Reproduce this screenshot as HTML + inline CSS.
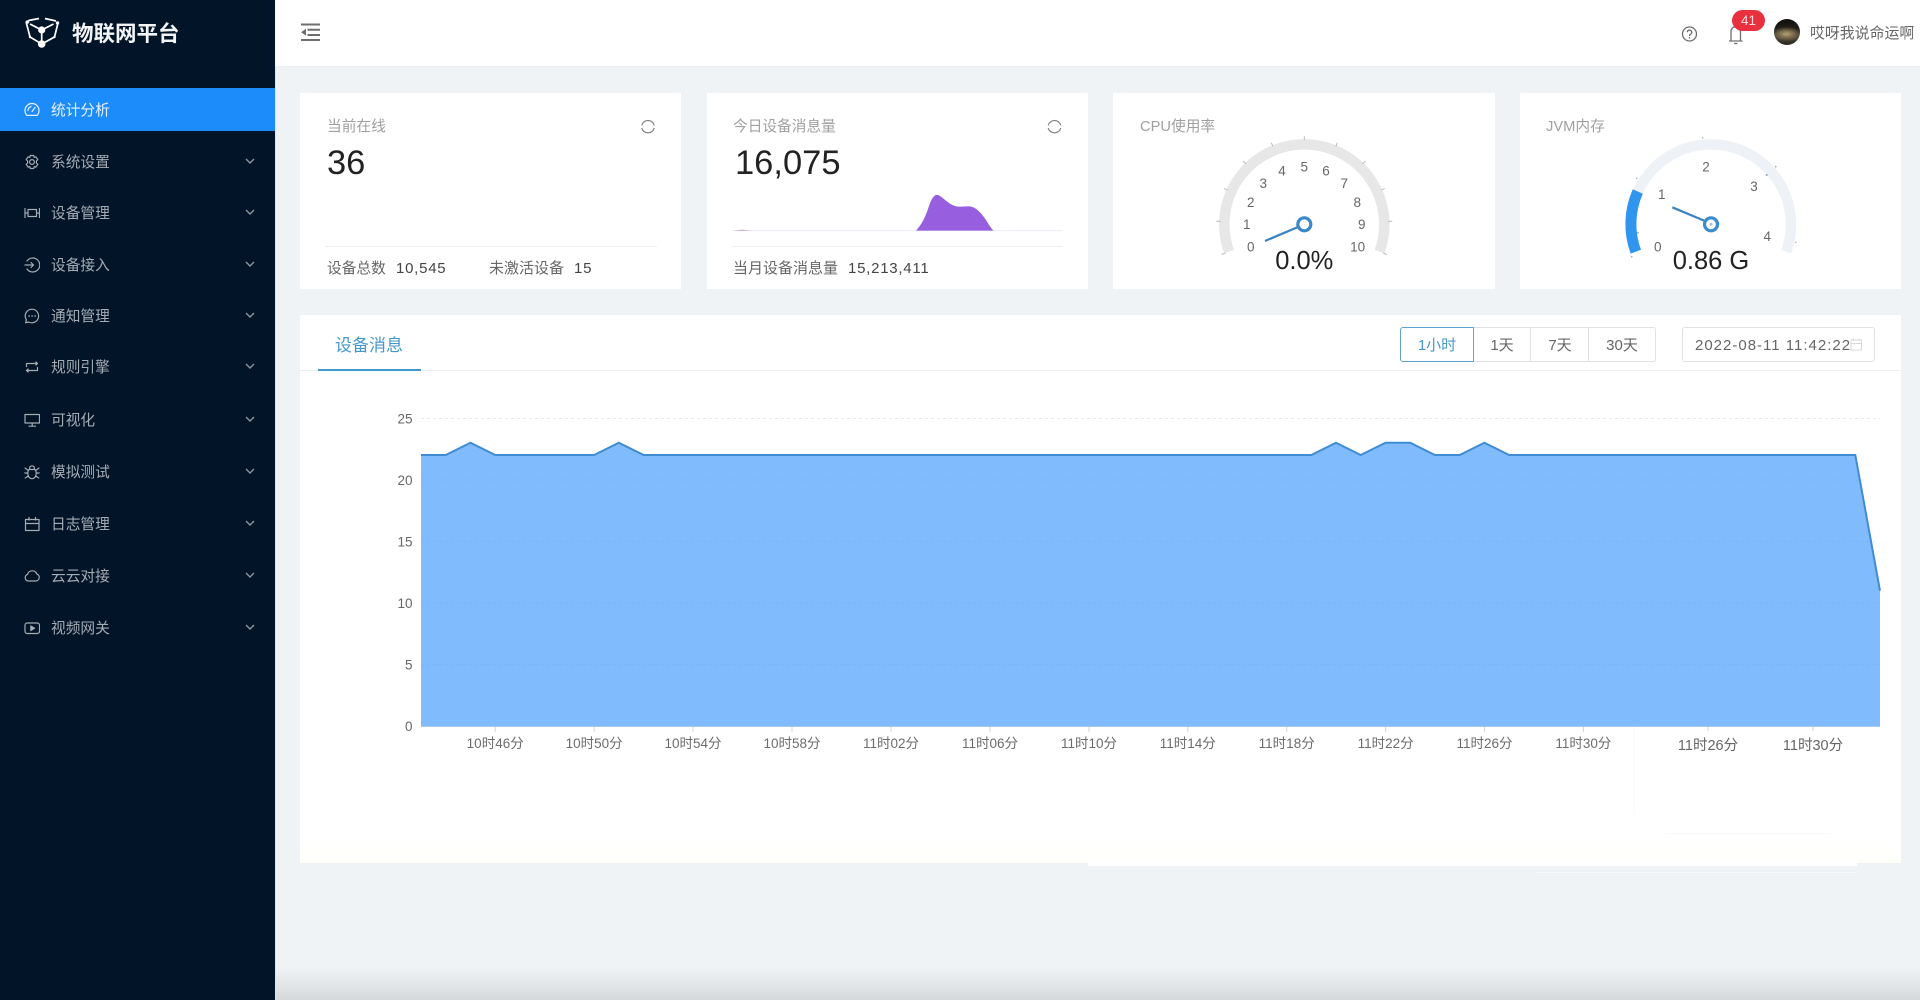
<!DOCTYPE html>
<html lang="zh-CN">
<head>
<meta charset="utf-8">
<title>物联网平台</title>
<style>
html,body{margin:0;padding:0;width:1920px;height:1000px;overflow:hidden;background:#eff3f6;font-family:"Liberation Sans","Noto Sans CJK SC",sans-serif}
div,span{box-sizing:border-box}
.a{position:absolute}
.t{position:absolute;white-space:nowrap;line-height:20px;height:20px}
#side{left:0;top:0;width:275px;height:1000px;background:#021428;overflow:hidden}
#active{left:0;top:88px;width:275px;height:43px;background:#1c8cfa}
.m{position:absolute;left:0;width:275px;height:20px;color:#a4acb4;font-size:14.7px;line-height:20px}
.m span{position:absolute;left:51px;top:0;white-space:nowrap}
.m svg.i{position:absolute;left:24px;top:1px;width:16px;height:16px;fill:none;stroke:currentColor;stroke-width:1.2;stroke-linecap:round;stroke-linejoin:round}
.m svg.c{position:absolute;left:245px;top:5px;width:10px;height:6px;fill:none;stroke:#8d959d;stroke-width:1.4}
#head{left:275px;top:0;width:1645px;height:67px;background:#fff;border-bottom:1px solid #e9eef0}
.card{position:absolute;background:#fff}
.ttl{font-size:14.7px;color:#a0a0a0}
.big{font-size:34.5px;color:#222;line-height:40px;height:40px}
.ft{font-size:14.7px;color:#666}
.num{font-size:15px;color:#444;letter-spacing:.75px}
.hr{position:absolute;height:1px;background:#eeeff2}
.btn{position:absolute;top:327px;height:35px;border:1px solid #dfe1e4;background:#fff;font-size:15px;color:#666;line-height:35px;text-align:center;white-space:nowrap}
svg.page{position:absolute;left:0;top:0;width:1920px;height:1000px;pointer-events:none}
svg text{font-family:"Liberation Sans","Noto Sans CJK SC",sans-serif}
</style>
</head>
<body>

<!-- Cards -->
<div class="card" style="left:300px;top:93px;width:381px;height:196px"></div>
<div class="card" style="left:707px;top:93px;width:381px;height:196px"></div>
<div class="card" style="left:1113px;top:93px;width:382px;height:196px"></div>
<div class="card" style="left:1520px;top:93px;width:381px;height:196px"></div>
<div class="card" style="left:300px;top:315px;width:1601px;height:548px;background:linear-gradient(#fff 0,#fff 96%,#fffffa 100%)"></div>
<div class="a" style="left:1088px;top:860px;width:769px;height:6px;background:#fff"></div>
<div class="a" style="left:1536px;top:872px;width:321px;height:1px;background:#f7f9fb"></div>
<div class="a" style="left:275px;top:968px;width:1645px;height:32px;background:linear-gradient(rgba(205,210,213,0),#d5d9dc)"></div>

<!-- Header -->
<div id="head" class="a"></div>
<svg class="page" viewBox="0 0 1920 1000">
  <g stroke="#6f6f6f" stroke-width="2" fill="none">
    <path d="M301 24.5H320M307.5 29.7H320M307.5 35H320M301 40H320"/>
  </g>
  <path d="M301 32.2L306 28.8V35.6Z" fill="#6f6f6f"/>
  <g fill="none" stroke="#6f6f6f" stroke-width="1.3">
    <circle cx="1689.5" cy="34" r="7"/>
    <path d="M1687.3 32.3A2.2 2.2 0 1 1 1690.5 34.3C1689.8 34.8 1689.5 35.2 1689.5 36"/>
    <path d="M1731 41V31.5A4.7 4.7 0 0 1 1740.5 31.5V41M1729 41H1742.5M1734 43.5H1737.5"/>
  </g>
  <circle cx="1689.5" cy="37.8" r=".8" fill="#6f6f6f"/>
</svg>
<div class="a" style="left:1732px;top:10px;width:33px;height:21px;background:#e8303f;border-radius:11px;color:#fbd9dc;font-size:13.5px;line-height:21px;text-align:center">41</div>
<div class="a" style="left:1774px;top:19px;width:26px;height:26px;border-radius:50%;background:radial-gradient(ellipse 60% 28% at 48% 58%,#b3a17a 0,#7d6c4f 45%,rgba(40,36,28,0) 100%),linear-gradient(#0f0e0c 0,#27231b 45%,#4a4334 70%,#2a2720 100%)"></div>
<div class="t" style="left:1810px;top:24px;font-size:14.9px;color:#666">哎呀我说命运啊</div>

<!-- Sidebar -->
<div id="side" class="a">
  <svg class="a" style="left:0;top:0" width="70" height="60" viewBox="0 0 70 60" fill="none" stroke="#fff" stroke-width="1.7">
    <path d="M26 21.5L30 37 41.7 44 54.5 37 58 23M28.5 20.5L39 18.5M45 18.5L56 21M30 24L41.7 30 53.5 24M41.7 30V44"/>
    <g fill="#fff" stroke="none"><circle cx="41.7" cy="30" r="3.6"/><circle cx="41.7" cy="44" r="3.8"/><circle cx="27.5" cy="22" r="1.7"/><circle cx="57.5" cy="23" r="1.7"/><circle cx="30" cy="37" r="1.2"/><circle cx="54.5" cy="37" r="1.2"/></g>
  </svg>
  <div class="t" style="left:72px;top:23px;font-size:21.5px;font-weight:700;color:#f2f4f6;line-height:22px;height:22px">物联网平台</div>

  <div id="active" class="a"></div>
  <div class="m" style="top:101px;color:#e8f2fd">
    <svg class="i" viewBox="0 0 16 16"><path d="M3 13.4A7 7 0 1 1 13 13.4Z"/><path d="M8 9.5L11 5.5M4 8.5A4.5 4.5 0 0 1 7 4.5"/></svg>
    <span>统计分析</span>
  </div>

  <div class="m" style="top:153px">
    <svg class="i" viewBox="0 0 16 16"><path d="M6.3 1.5H9.7L10.2 3.4 11.9 2.8 13.8 5.6 12.4 7V9L13.8 10.4 11.9 13.2 10.2 12.6 9.7 14.5H6.3L5.8 12.6 4.1 13.2 2.2 10.4 3.6 9V7L2.2 5.6 4.1 2.8 5.8 3.4Z"/><circle cx="8" cy="8" r="2.4"/></svg>
    <span>系统设置</span><svg class="c" viewBox="0 0 10 6"><path d="M1 1L5 5 9 1"/></svg>
  </div>
  <div class="m" style="top:204px">
    <svg class="i" viewBox="0 0 16 16"><path d="M1 3.5V12.5M15.5 3.5V12.5M1 8H4M12.5 8H15.5M4 4.5H12.5V11.5H4Z"/></svg>
    <span>设备管理</span><svg class="c" viewBox="0 0 10 6"><path d="M1 1L5 5 9 1"/></svg>
  </div>
  <div class="m" style="top:256px">
    <svg class="i" viewBox="0 0 16 16"><path d="M3 4A7 7 0 1 1 3 12M1 8H9.5M7 5.5L9.5 8 7 10.5"/></svg>
    <span>设备接入</span><svg class="c" viewBox="0 0 10 6"><path d="M1 1L5 5 9 1"/></svg>
  </div>
  <div class="m" style="top:307px">
    <svg class="i" viewBox="0 0 16 16"><path d="M8 1.2A6.8 6.8 0 1 1 4.6 14L1.6 14.8 2.4 11.8A6.8 6.8 0 0 1 8 1.2Z"/><path d="M5 8H5.2M8 8H8.2M11 8H11.2" stroke-width="1.6"/></svg>
    <span>通知管理</span><svg class="c" viewBox="0 0 10 6"><path d="M1 1L5 5 9 1"/></svg>
  </div>
  <div class="m" style="top:358px">
    <svg class="i" viewBox="0 0 16 16"><path d="M2.5 7.5V4.5H13.5M11.8 3L13.5 4.5 11.8 6M13.5 8.5V11.5H2.5M4.2 10L2.5 11.5 4.2 13"/></svg>
    <span>规则引擎</span><svg class="c" viewBox="0 0 10 6"><path d="M1 1L5 5 9 1"/></svg>
  </div>
  <div class="m" style="top:411px">
    <svg class="i" viewBox="0 0 16 16"><path d="M1 2.5H15.5V11H1ZM8.2 11V14M5 14.2H11.5"/></svg>
    <span>可视化</span><svg class="c" viewBox="0 0 10 6"><path d="M1 1L5 5 9 1"/></svg>
  </div>
  <div class="m" style="top:463px">
    <svg class="i" viewBox="0 0 16 16"><path d="M5 5.5H11C12.2 7 12.4 9 12 11 11.5 13.2 9.8 14.8 8 14.8S4.5 13.2 4 11C3.6 9 3.8 7 5 5.5ZM5.5 5.2C5.5 3 6.5 1.8 8 1.8S10.5 3 10.5 5.2M1 4L4.3 6.5M15 4L11.7 6.5M.8 9H3.8M15.2 9H12.2M1.2 14L4.3 12M14.8 14L11.7 12"/></svg>
    <span>模拟测试</span><svg class="c" viewBox="0 0 10 6"><path d="M1 1L5 5 9 1"/></svg>
  </div>
  <div class="m" style="top:515px">
    <svg class="i" viewBox="0 0 16 16"><path d="M1.5 3.5H15V14.5H1.5ZM1.5 7.5H15M5 1.5V4M11.5 1.5V4"/></svg>
    <span>日志管理</span><svg class="c" viewBox="0 0 10 6"><path d="M1 1L5 5 9 1"/></svg>
  </div>
  <div class="m" style="top:567px">
    <svg class="i" viewBox="0 0 16 16"><path d="M4.2 13H12A3.6 3.6 0 0 0 12.8 6 4.9 4.9 0 0 0 3.5 6.4 3.4 3.4 0 0 0 4.2 13Z"/></svg>
    <span>云云对接</span><svg class="c" viewBox="0 0 10 6"><path d="M1 1L5 5 9 1"/></svg>
  </div>
  <div class="m" style="top:619px">
    <svg class="i" viewBox="0 0 16 16"><rect x="1" y="3" width="14.5" height="10.5" rx="2.2"/><path d="M6.8 6L10.5 8.2 6.8 10.5Z" fill="currentColor"/></svg>
    <span>视频网关</span><svg class="c" viewBox="0 0 10 6"><path d="M1 1L5 5 9 1"/></svg>
  </div>
</div>
<div class="a" style="left:275px;top:67px;width:1px;height:933px;background:#e2e6ea"></div>

<!-- Card contents -->
<div class="t ttl" style="left:327px;top:117px">当前在线</div>
<div class="t big" style="left:327px;top:143px">36</div>
<div class="hr" style="left:325px;top:246px;width:332px"></div>
<div class="t ft" style="left:327px;top:259px">设备总数</div>
<div class="t num" style="left:396px;top:259px">10,545</div>
<div class="t ft" style="left:489px;top:259px;font-size:15px">未激活设备</div>
<div class="t num" style="left:574px;top:259px">15</div>

<div class="t ttl" style="left:733px;top:117px">今日设备消息量</div>
<div class="t big" style="left:735px;top:143px">16,075</div>
<div class="hr" style="left:732px;top:246px;width:331px"></div>
<div class="t ft" style="left:733px;top:259px;font-size:15px">当月设备消息量</div>
<div class="t num" style="left:848px;top:259px">15,213,411</div>

<div class="t ttl" style="left:1140px;top:117px">CPU使用率</div>
<div class="t ttl" style="left:1546px;top:117px">JVM内存</div>

<!-- Chart header -->
<div class="t" style="left:335px;top:336px;font-size:17px;color:#4497cd">设备消息</div>
<div class="hr" style="left:300px;top:370px;width:1601px;height:1px;background:#eceef0"></div>
<div class="a" style="left:318px;top:369px;width:103px;height:2px;background:#409bcc"></div>

<div class="btn" style="left:1472px;width:60px">1天</div>
<div class="btn" style="left:1530px;width:60px">7天</div>
<div class="btn" style="left:1588px;width:68px;border-radius:0 3px 3px 0">30天</div>
<div class="btn" style="left:1400px;width:74px;border-color:#5ea3cf;color:#4a98cd;border-radius:3px 0 0 3px">1小时</div>
<div class="btn" style="left:1682px;width:193px;border-radius:3px;text-align:left;padding-left:12px;letter-spacing:1px;color:#666">2022-08-11 11:42:22</div>

<svg class="page" viewBox="0 0 1920 1000">
  <!-- refresh icons -->
  <g fill="none" stroke="#858585" stroke-width="1.2">
    <path d="M641.7 125.4A6.5 6.5 0 0 1 654.3 125.4M654.3 128A6.5 6.5 0 0 1 641.7 128"/>
    <path d="M1048.2 125.4A6.5 6.5 0 0 1 1060.8 125.4M1060.8 128A6.5 6.5 0 0 1 1048.2 128"/>
  </g>

  <!-- sparkline -->
  <path d="M733 230.6H1063" stroke="#f2eff7" stroke-width="1.2"/>
  <path d="M733 230.8L742 229.6 752 230.8Z" fill="#b9a6d8"/>
  <path d="M916 230.6C922 224 925 218 929 206 932 197 935 194 938 195 943 197 948 204 955 206 960 207.5 965 206 971 206.5 977 208 982 214 986 220 989 225 991 228 993.5 230.6Z" fill="#975fe0"/>

  <!-- Gauge 1 -->
  <path d="M1229.1 251.7A80 80 0 1 1 1379.5 251.7" fill="none" stroke="#e7e7e7" stroke-width="10.5"/>
  <g transform="translate(1304.3 224.3)" stroke="#b4b4b4" stroke-width=".9">
    <line x1="-84" x2="-88" transform="rotate(-20)"/><line x1="-84" x2="-88" transform="rotate(2)"/><line x1="-84" x2="-88" transform="rotate(24)"/><line x1="-84" x2="-88" transform="rotate(46)"/><line x1="-84" x2="-88" transform="rotate(68)"/><line x1="-84" x2="-88" transform="rotate(90)"/><line x1="-84" x2="-88" transform="rotate(112)"/><line x1="-84" x2="-88" transform="rotate(134)"/><line x1="-84" x2="-88" transform="rotate(156)"/><line x1="-84" x2="-88" transform="rotate(178)"/><line x1="-84" x2="-88" transform="rotate(200)"/>
  </g>
  <g font-size="13.5" fill="#666" text-anchor="middle">
    <text x="1250.7" y="251.5">0</text><text x="1246.7" y="229">1</text><text x="1250.7" y="207">2</text><text x="1263.3" y="188">3</text><text x="1282" y="175.5">4</text><text x="1304.3" y="171.5">5</text><text x="1326" y="175.5">6</text><text x="1344.3" y="188">7</text><text x="1357.3" y="207">8</text><text x="1361.7" y="229">9</text><text x="1357.7" y="251.5">10</text>
  </g>
  <line x1="1265" y1="241" x2="1298" y2="227" stroke="#3b82c0" stroke-width="2.2"/>
  <circle cx="1304.3" cy="224.3" r="6.5" fill="#fff" stroke="#3a88ca" stroke-width="3.2"/>
  <text x="1304.3" y="269" font-size="25.5" fill="#222" text-anchor="middle">0.0%</text>

  <!-- Gauge 2 -->
  <path d="M1635.8 251.7A80 80 0 1 1 1786.2 251.7" fill="none" stroke="#eef1f5" stroke-width="10.5"/>
  <path d="M1635.8 251.7A80 80 0 0 1 1637.8 191.5" fill="none" stroke="#2f95ef" stroke-width="11"/>
  <g fill="#9fb2c6">
    <circle cx="1702.7" cy="137.8" r=".8"/><circle cx="1775.7" cy="166.7" r=".9"/><circle cx="1766.7" cy="175" r="1.1"/><circle cx="1795.7" cy="242.3" r=".8"/><circle cx="1636.7" cy="178.3" r=".8"/><circle cx="1638" cy="232.7" r="1"/><circle cx="1631.7" cy="256.7" r=".9"/>
  </g>
  <g font-size="13.5" fill="#666" text-anchor="middle">
    <text x="1657.7" y="251.5">0</text><text x="1661.7" y="199">1</text><text x="1706" y="171.5">2</text><text x="1754" y="191">3</text><text x="1767.3" y="241">4</text>
  </g>
  <line x1="1672.3" y1="207.3" x2="1705" y2="221" stroke="#3b82c0" stroke-width="2.2"/>
  <circle cx="1711" cy="224.3" r="6.5" fill="#fff" stroke="#3a8ccf" stroke-width="3.2"/>
  <circle cx="1711" cy="224.3" r="1.5" fill="#b0bfcc"/>
  <text x="1711" y="269" font-size="25.5" fill="#222" text-anchor="middle">0.86 G</text>

  <!-- Date calendar icon -->
  <g fill="none" stroke="#d6d8da" stroke-width="1">
    <rect x="1851" y="340" width="10.5" height="10"/><path d="M1851 343.5H1861.5M1853.5 338.5V341M1859 338.5V341"/>
  </g>

  <!-- Main chart -->
  <g stroke="#e6e8ea" stroke-width="1" stroke-dasharray="3 3">
    <line x1="421" y1="418.5" x2="1880" y2="418.5"/>
  </g>
  <path d="M421 726V455H445.7L470.5 442.7 495.2 455H594.1L618.8 442.7 643.6 455H1311.3L1336 442.7 1360.7 455 1385.5 442.7H1410.2L1434.9 455H1459.7L1484.4 442.7 1509.1 455H1855.3L1880 590.7V726Z" fill="#80bbfd"/>
  <g stroke="#6faae9" stroke-width="1" stroke-dasharray="3 3" opacity=".25">
    <line x1="421" y1="480" x2="1865" y2="480"/><line x1="421" y1="541.5" x2="1875" y2="541.5"/><line x1="421" y1="603" x2="1880" y2="603"/><line x1="421" y1="664.5" x2="1880" y2="664.5"/>
  </g>
  <path d="M421 455H445.7L470.5 442.7 495.2 455H594.1L618.8 442.7 643.6 455H1311.3L1336 442.7 1360.7 455 1385.5 442.7H1410.2L1434.9 455H1459.7L1484.4 442.7 1509.1 455H1855.3L1880 590.7" fill="none" stroke="#3f8cd2" stroke-width="2"/>
  <line x1="421" y1="726.5" x2="1880" y2="726.5" stroke="#a9c9ea" stroke-width="1"/>

  <g font-size="13.5" fill="#666" text-anchor="end">
    <text x="412.5" y="423.5">25</text><text x="412.5" y="485">20</text><text x="412.5" y="546.5">15</text><text x="412.5" y="608">10</text><text x="412.5" y="669.5">5</text><text x="412.5" y="731">0</text>
  </g>

  <g stroke="#cfd3d6" stroke-width="1">
    <path d="M495.2 727V732M594.1 727V732M693 727V732M792 727V732M891 727V732M990 727V732M1089 727V732M1187.8 727V732M1286.7 727V732M1385.6 727V732M1484.5 727V732M1583.4 727V732"/>
  </g>
  <g font-size="13.5" fill="#6c6c6c" text-anchor="middle">
    <text x="495.2" y="748">10时46分</text><text x="594.1" y="748">10时50分</text><text x="693" y="748">10时54分</text><text x="792" y="748">10时58分</text><text x="891" y="748">11时02分</text><text x="990" y="748">11时06分</text><text x="1089" y="748">11时10分</text><text x="1187.8" y="748">11时14分</text><text x="1286.7" y="748">11时18分</text><text x="1385.6" y="748">11时22分</text><text x="1484.5" y="748">11时26分</text><text x="1583.4" y="748">11时30分</text>
  </g>

  <!-- overlay patch -->
  <line x1="1634" y1="727" x2="1634" y2="815" stroke="#f9f9f9" stroke-width="1"/>
  <line x1="1665" y1="833.5" x2="1830" y2="833.5" stroke="#f9f9f7" stroke-width="1"/>
  <g stroke="#cfd3d6" stroke-width="1"><path d="M1708 727V731M1813 727V731"/></g>
  <g font-size="14.5" fill="#666" text-anchor="middle">
    <text x="1708" y="750">11时26分</text><text x="1813" y="750">11时30分</text>
  </g>
</svg>
</body>
</html>
